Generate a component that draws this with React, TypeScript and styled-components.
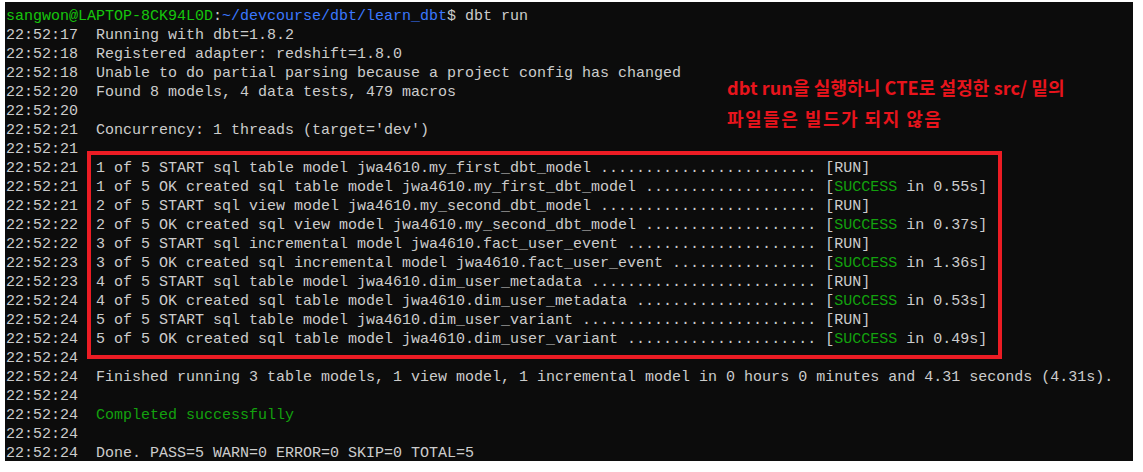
import React from "react";
import styled, { createGlobalStyle } from "styled-components";

const Global = createGlobalStyle`
  html, body { margin: 0; padding: 0; background: #ffffff; }
  body { width: 1143px; height: 472px; overflow: hidden; }
`;

const Page = styled.div`
  padding: 2px 0 0 5px;
`;

const Terminal = styled.div`
  position: relative;
  width: 1128px;
  height: 459px;
  box-sizing: border-box;
  padding: 5px 0 0 1px;
  background: #0c0c0c;
  color: #cccccc;
  font-family: "Liberation Mono", "DejaVu Sans Mono", monospace;
  font-size: 15px;
  overflow: hidden;
`;

const Line = styled.div`
  height: 19px;
  line-height: 19px;
  white-space: pre;
`;

type Tone = "plain" | "host" | "path" | "ok";

const Seg = styled.span<{ $tone: Tone }>`
  color: ${(p) =>
    p.$tone === "host"
      ? "#16c60c"
      : p.$tone === "path"
      ? "#3b78ff"
      : p.$tone === "ok"
      ? "#13a10e"
      : "#cccccc"};
`;

const HighlightBox = styled.div`
  position: absolute;
  left: 82px;
  top: 149px;
  width: 907px;
  height: 200px;
  border: 4px solid #ec1c24;
`;

const Note = styled.div`
  position: absolute;
  left: 722px;
  top: 70px;
  color: #e8141c;
  font-family: "Noto Sans CJK KR", "Noto Sans", sans-serif;
  font-weight: 700;
  font-size: 18px;
  line-height: 31px;
`;

const NoteLine = styled.div<{ $tracking: number }>`
  letter-spacing: ${(p) => p.$tracking}px;
  white-space: nowrap;
`;

type Segment = [Tone, string];

const row = (msg: string, status: Segment[]): Segment[] => [
  ["plain", msg + " " + ".".repeat(Math.max(0, 79 - msg.length)) + " "],
  ...status,
];

const run: Segment[] = [["plain", "[RUN]"]];
const ok = (t: string): Segment[] => [
  ["plain", "["],
  ["ok", "SUCCESS"],
  ["plain", ` in ${t}]`],
];

const lines: Segment[][] = [
  [
    ["host", "sangwon@LAPTOP-8CK94L0D"],
    ["plain", ":"],
    ["path", "~/devcourse/dbt/learn_dbt"],
    ["plain", "$ dbt run"],
  ],
  [["plain", "22:52:17  Running with dbt=1.8.2"]],
  [["plain", "22:52:18  Registered adapter: redshift=1.8.0"]],
  [["plain", "22:52:18  Unable to do partial parsing because a project config has changed"]],
  [["plain", "22:52:20  Found 8 models, 4 data tests, 479 macros"]],
  [["plain", "22:52:20"]],
  [["plain", "22:52:21  Concurrency: 1 threads (target='dev')"]],
  [["plain", "22:52:21"]],
  [["plain", "22:52:21  "], ...row("1 of 5 START sql table model jwa4610.my_first_dbt_model", run)],
  [["plain", "22:52:21  "], ...row("1 of 5 OK created sql table model jwa4610.my_first_dbt_model", ok("0.55s"))],
  [["plain", "22:52:21  "], ...row("2 of 5 START sql view model jwa4610.my_second_dbt_model", run)],
  [["plain", "22:52:22  "], ...row("2 of 5 OK created sql view model jwa4610.my_second_dbt_model", ok("0.37s"))],
  [["plain", "22:52:22  "], ...row("3 of 5 START sql incremental model jwa4610.fact_user_event", run)],
  [["plain", "22:52:23  "], ...row("3 of 5 OK created sql incremental model jwa4610.fact_user_event", ok("1.36s"))],
  [["plain", "22:52:23  "], ...row("4 of 5 START sql table model jwa4610.dim_user_metadata", run)],
  [["plain", "22:52:24  "], ...row("4 of 5 OK created sql table model jwa4610.dim_user_metadata", ok("0.53s"))],
  [["plain", "22:52:24  "], ...row("5 of 5 START sql table model jwa4610.dim_user_variant", run)],
  [["plain", "22:52:24  "], ...row("5 of 5 OK created sql table model jwa4610.dim_user_variant", ok("0.49s"))],
  [["plain", "22:52:24"]],
  [["plain", "22:52:24  Finished running 3 table models, 1 view model, 1 incremental model in 0 hours 0 minutes and 4.31 seconds (4.31s)."]],
  [["plain", "22:52:24"]],
  [["plain", "22:52:24  "], ["ok", "Completed successfully"]],
  [["plain", "22:52:24"]],
  [["plain", "22:52:24  Done. PASS=5 WARN=0 ERROR=0 SKIP=0 TOTAL=5"]],
];

export default function App() {
  return (
    <>
      <Global />
      <Page>
        <Terminal>
          {lines.map((segs, i) => (
            <Line key={i}>
              {segs.map(([tone, text], j) => (
                <Seg key={j} $tone={tone}>
                  {text}
                </Seg>
              ))}
            </Line>
          ))}
          <HighlightBox />
          <Note>
            <NoteLine $tracking={0.1}>dbt run을 실행하니 CTE로 설정한 src/ 밑의</NoteLine>
            <NoteLine $tracking={1.5}>파일들은 빌드가 되지 않음</NoteLine>
          </Note>
        </Terminal>
      </Page>
    </>
  );
}
